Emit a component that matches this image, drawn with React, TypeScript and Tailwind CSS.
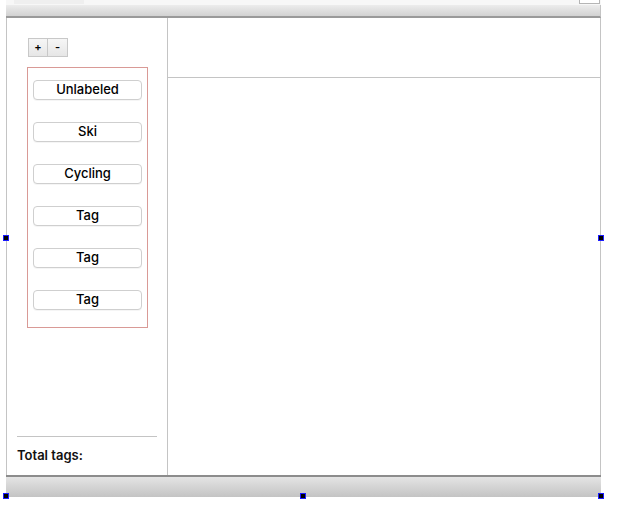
import React from 'react'

const tags = ['Unlabeled', 'Ski', 'Cycling', 'Tag', 'Tag', 'Tag']

function Handle({ className }: { className: string }) {
  return (
    <div className={`absolute w-[6px] h-[6px] bg-[#1a1aff] flex items-center justify-center ${className}`}>
      <div className="w-[4px] h-[4px] bg-black" />
    </div>
  )
}

export default function App() {
  return (
    <div className="relative w-[618px] h-[515px] bg-white font-['Inter','Liberation_Sans',Arial,sans-serif] text-[13px] text-black">
      {/* top strip */}
      <div className="flex h-[5px] ml-[6px] w-[595px] bg-[#f7f7f7]">
        <div className="ml-[8px] w-[70px] h-[4px] bg-[#efefef]" />
        <div className="ml-auto mr-[1px] w-[21px] h-[4px] border border-t-0 border-[#b5b5b5] bg-white" />
      </div>

      <div className="ml-[6px] w-[595px] flex flex-col">
        {/* toolbar */}
        <div className="h-[13px] bg-gradient-to-b from-[#ececec] to-[#d2d2d2] border-b-2 border-[#9a9a9a] border-r border-r-[#c4c4c4]" />

        {/* body */}
        <div className="flex h-[457px] border-l border-r border-[#c4c4c4]">
          {/* sidebar */}
          <div className="w-[161px] flex flex-col border-r border-[#c4c4c4]">
            <div className="flex ml-[21px] mt-[20px]">
              <button className="w-[20px] h-[19px] border border-[#c8c8c8] bg-gradient-to-b from-[#f6f6f6] to-[#e6e6e6] text-[11px] font-semibold leading-none">+</button>
              <button className="w-[20px] h-[19px] border border-l-0 border-[#c8c8c8] bg-gradient-to-b from-[#f6f6f6] to-[#e6e6e6] text-[11px] font-semibold leading-none">-</button>
            </div>
            <div className="ml-[20px] mt-[10px] w-[121px] h-[261px] border border-[#d99a96] flex flex-col gap-[22px] pt-[12px] px-[5px]">
              {tags.map((t, i) => (
                <div key={i} className="h-[20px] w-[109px] rounded-[4px] border border-[#cfcfcf] bg-white flex items-center justify-center text-[13px] font-medium shadow-[0_1px_0_rgba(0,0,0,0.04)]">
                  {t}
                </div>
              ))}
            </div>
            <div className="mt-auto mx-[10px] border-t border-[#c4c4c4] pt-[9px] pb-[10px]">
              <span className="font-semibold text-[13px] text-[#111]">Total tags:</span>
            </div>
          </div>

          {/* content */}
          <div className="flex-1 flex flex-col">
            <div className="h-[60px] border-b border-[#c4c4c4]" />
            <div className="flex-1" />
          </div>
        </div>

        {/* bottom bar */}
        <div className="h-[22px] border-t-2 border-[#8c8c8c] bg-gradient-to-b from-[#e4e4e4] to-[#c4c4c4]" />
      </div>

      <Handle className="left-[3px] top-[235px]" />
      <Handle className="left-[598px] top-[235px]" />
      <Handle className="left-[3px] top-[493px]" />
      <Handle className="left-[300px] top-[493px]" />
      <Handle className="left-[598px] top-[493px]" />
    </div>
  )
}
